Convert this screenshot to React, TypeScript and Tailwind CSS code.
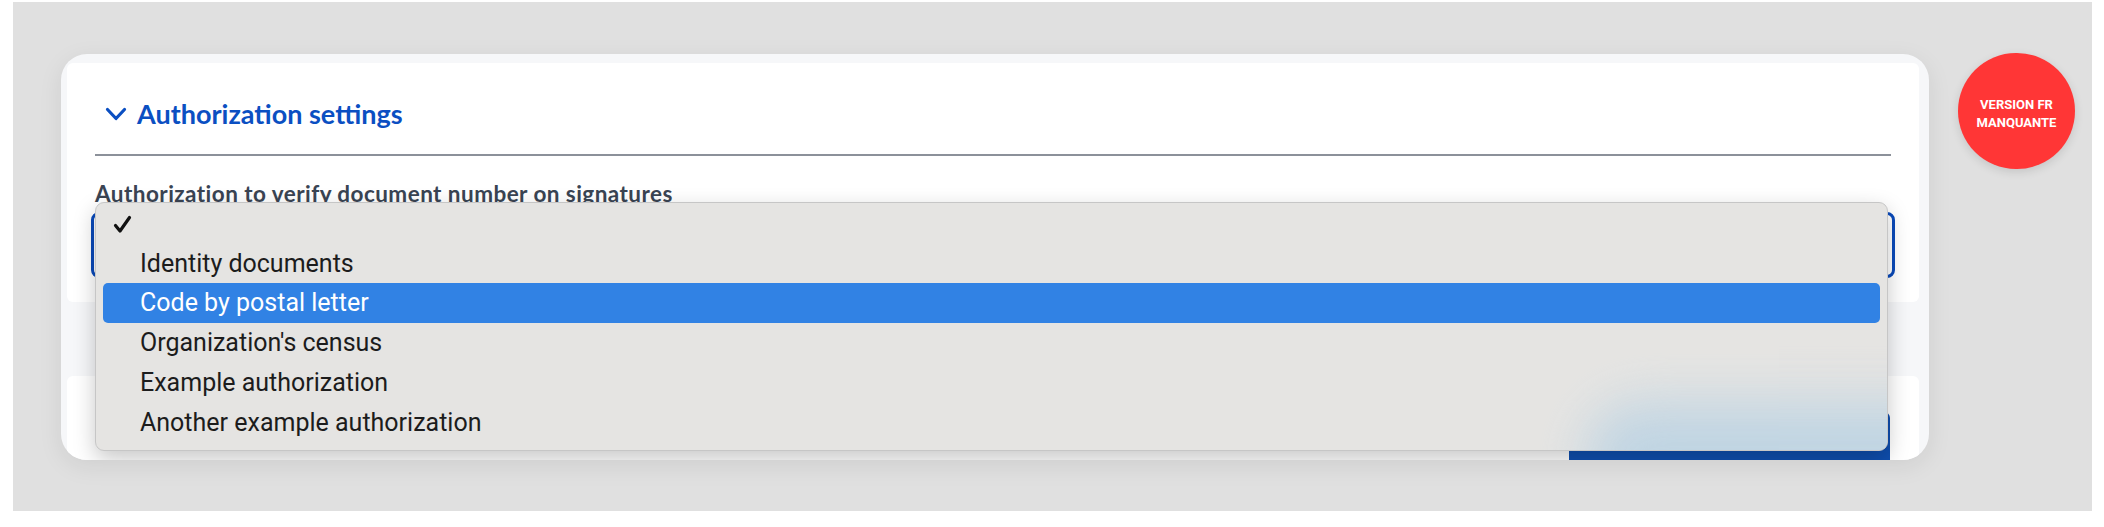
import type { ReactNode } from "react";

const options = [
  "Identity documents",
  "Code by postal letter",
  "Organization's census",
  "Example authorization",
  "Another example authorization",
];

const selected = "Code by postal letter";

function Check() {
  return (
    <svg width="19" height="19" viewBox="0 0 19 19" className="block">
      <path d="M2.5 10.5 L7 16 L16.5 2.5" fill="none" stroke="#111" strokeWidth="3.2" strokeLinecap="round" strokeLinejoin="round" />
    </svg>
  );
}

function MenuRow({ active, tall, children }: { active?: boolean; tall?: boolean; children: ReactNode }) {
  return (
    <div
      className={`flex items-center rounded-[5px] pl-[37px] ${tall ? "h-[40px]" : "h-[38px]"} ${
        active ? "bg-[#3182e4] text-white" : "text-[#1c1c1c]"
      }`}
    >
      {children}
    </div>
  );
}

export default function App() {
  return (
    <div className="h-[527px] w-[2104px] bg-white">
      <div className="ml-[13px] pt-[2px]">
        <div className="flex h-[509px] w-[2079px] items-start bg-[#e0e0e0]">
          {/* Card */}
          <div className="ml-[48px] mt-[52px] h-[406px] w-[1868px] overflow-hidden rounded-[26px] bg-[#f6f7f9] pl-[6px] pr-[10px] pt-[9px] shadow-[0_6px_24px_rgba(0,0,0,0.08)]">
            <div className="relative h-[239px] rounded-[6px] bg-white px-[28px] pt-[36px]">
              <div className="flex items-center pl-[10px]">
                <svg width="22" height="15" viewBox="0 0 22 15" className="mr-[10px] block">
                  <path d="M2.5 2.5 L11 11.5 L19.5 2.5" fill="none" stroke="#0b4fc2" strokeWidth="3.2" strokeLinecap="round" strokeLinejoin="round" />
                </svg>
                <span className="text-[27px] font-bold leading-[30px] text-[#0b4fc2] [font-family:Lato,'Noto_Sans',sans-serif]">
                  Authorization settings
                </span>
              </div>
              <div className="mt-[25px] h-[2px] w-full bg-[#8c919a]" />
              <div className="mt-[26px] text-[22.5px] font-bold leading-[24px] tracking-[0.45px] text-[#3a4453] [font-family:Lato,'Noto_Sans',sans-serif]">
                Authorization to verify document number on signatures
              </div>
              <div className="ml-[-4px] mr-[-4px] mt-[6px] h-[66px] rounded-[8px] border-[3px] border-[#0a4aba] bg-white" />

              {/* Native dropdown menu */}
              <div className="absolute left-[28px] top-[139px] h-[249px] w-[1793px] overflow-hidden rounded-[9px] border border-[#c6c6c6] bg-[#e5e4e2] px-[7px] pt-[4px] text-[25px] shadow-[0_8px_22px_rgba(0,0,0,0.22)] [font-family:Roboto,'Liberation_Sans',sans-serif]">
                <div className="pointer-events-none absolute left-[1490px] top-[200px] h-[110px] w-[400px] rounded-full bg-[#bcd3e3] opacity-90 blur-[26px]" />
                <div className="relative">
                  <MenuRow>
                    <span className="ml-[-27px] mt-[-4px]">
                      <Check />
                    </span>
                  </MenuRow>
                  <MenuRow>{options[0]}</MenuRow>
                  {options.slice(1).map((o) => (
                    <MenuRow key={o} tall active={o === selected}>
                      {o}
                    </MenuRow>
                  ))}
                </div>
              </div>
            </div>

            <div className="mt-[74px] flex h-[120px] justify-end rounded-[6px] bg-white pr-[29px] pt-[36px]">
              <div className="h-[60px] w-[321px] rounded-[6px] bg-[#0f4eae]" />
            </div>
          </div>

          {/* Missing translation badge */}
          <div className="ml-[29px] mt-[51px] flex h-[116px] w-[117px] flex-col items-center justify-center rounded-full bg-[#ff3636] pt-[6px] text-[13px] font-bold leading-[18px] text-white shadow-[0_3px_10px_rgba(0,0,0,0.12)] [font-family:Roboto,'Liberation_Sans',sans-serif]">
            <span>VERSION FR</span>
            <span>MANQUANTE</span>
          </div>
        </div>
      </div>
    </div>
  );
}
